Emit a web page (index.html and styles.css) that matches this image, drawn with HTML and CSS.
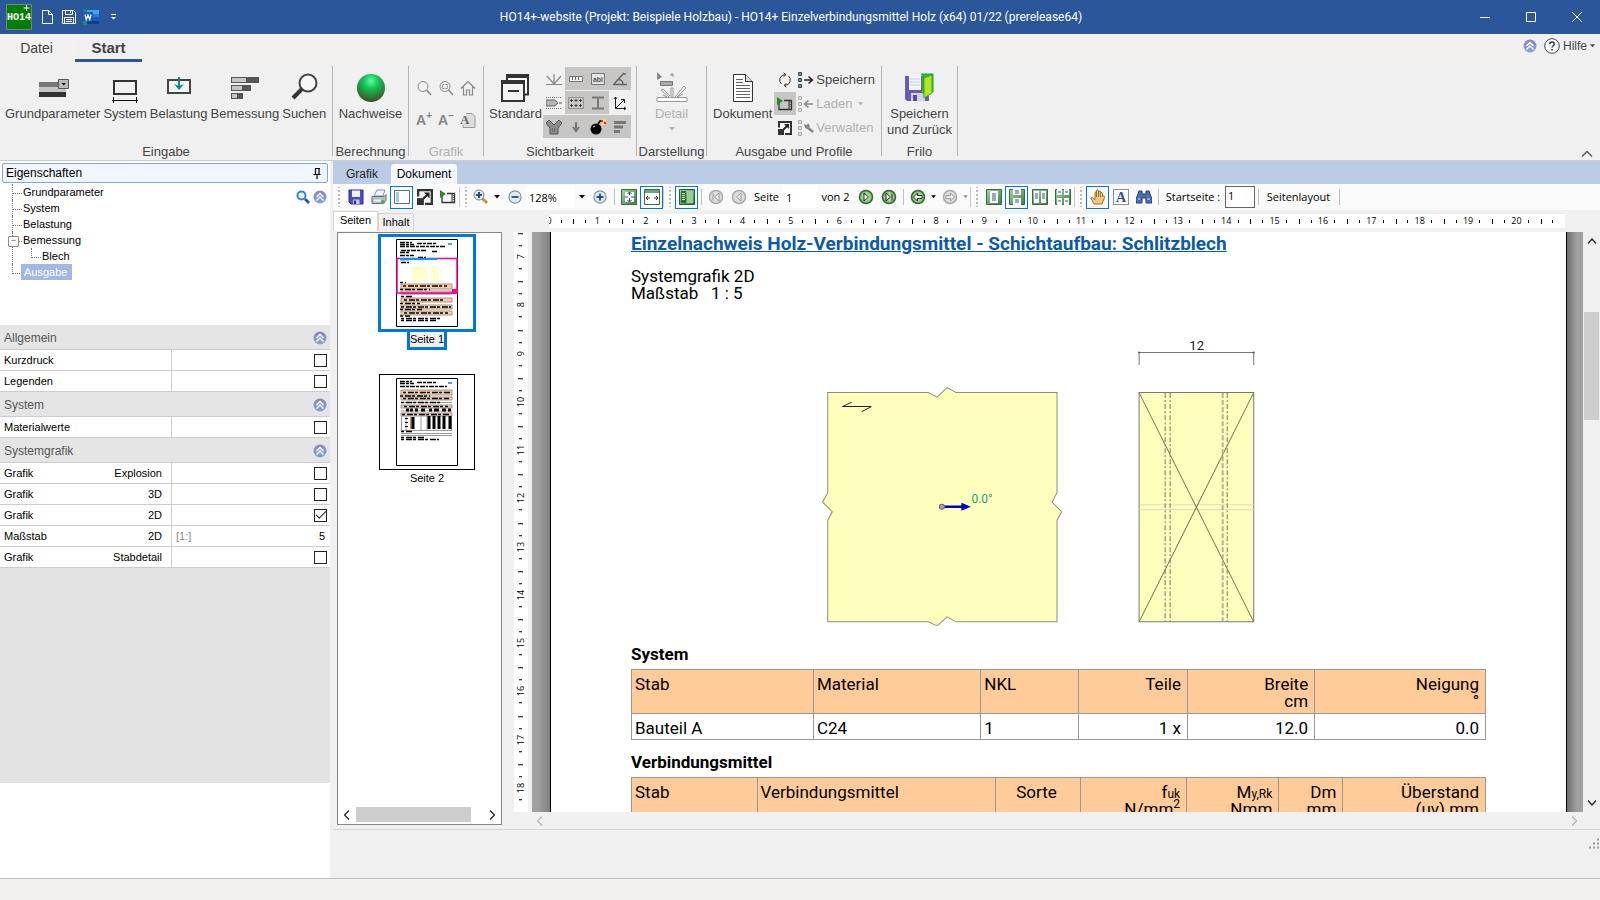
FILE: index.html
```html
<!DOCTYPE html>
<html lang="de">
<head>
<meta charset="utf-8">
<title>HO14+ Einzelverbindungsmittel Holz</title>
<link rel="stylesheet" href="styles.css">
</head>
<body>
<svg class="defs" aria-hidden="true">
  <defs>
    <radialGradient id="ball" cx="50%" cy="25%" r="75%"><stop offset="0" stop-color="#5dff9c"/><stop offset=".35" stop-color="#16c457"/><stop offset=".7" stop-color="#27863a"/><stop offset="1" stop-color="#4a4a22"/></radialGradient>
    <linearGradient id="lilac" x1="0" y1="0" x2="0" y2="1"><stop offset="0" stop-color="#8a83c4"/><stop offset="1" stop-color="#7ea6dc"/></linearGradient>
    <linearGradient id="leaf" x1="0" y1="0" x2="1" y2="1"><stop offset="0" stop-color="#a8d8a0"/><stop offset="1" stop-color="#3f7a45"/></linearGradient>
    <radialGradient id="gleaf"><stop offset="0" stop-color="#d9f5c8"/><stop offset="1" stop-color="#6fbf5f"/></radialGradient>
    <symbol id="fold" viewBox="0 0 14 14"><circle cx="7" cy="7" r="6.500" fill="url(#lilac)"/><path d="M3.500 7 7 3.500 10.500 7M3.500 10.500 7 7l3.500 3.500" fill="none" stroke="#fff" stroke-width="1.400"/></symbol>
    <symbol id="caret" viewBox="0 0 6 4"><path d="M0 0h6L3 3.500z" fill="currentColor"/></symbol>
    <symbol id="lens" viewBox="0 0 16 16"><circle cx="7" cy="6.500" r="5" fill="none" stroke="currentColor"/><path d="m10.500 10 4.500 5" stroke="currentColor" stroke-width="1.600"/></symbol>
    <symbol id="expand" viewBox="0 0 14 14"><path d="M1 1h12v12H1z" fill="#f4f4f4" stroke="#333" stroke-width="2"/><path d="M0 6.500h7V14H0z" fill="#f4f4f4"/><path d="M0 8h6v6H0z" fill="#333"/><path d="m5.500 8.500 4-4" stroke="#222" stroke-width="1.800"/><path d="M6 3h5v5z" fill="#222"/></symbol>
    <symbol id="play" viewBox="0 0 16 14"><path d="M2 5v7.500h12.500v-9H7" fill="none" stroke="#333" stroke-width="1.300"/><path d="M12 4v8" stroke="#333"/><path d="M13.200 5v6" stroke="#333" stroke-dasharray="1 1"/><path d="M0 0l6 4-6 4z" fill="#2c8a2c"/></symbol>
    <symbol id="disk" viewBox="0 0 16 16"><path d="M1 1h14v14H3l-2-2z" fill="#4a4fc0" stroke="#2b2f86"/><path d="M4 1.500h8V8H4z" fill="#eef3ff"/><path d="M5 10.500h6.500V15H5z" fill="#c5cbe8"/><path d="M6 11.500h2V15H6z" fill="#28306e"/></symbol>
    <symbol id="minus" viewBox="0 0 14 14"><circle cx="7" cy="7" r="5.300" fill="#dfe9f4" stroke="#8091a6"/><path d="M4 7h6" stroke="#274d87" stroke-width="1.600"/></symbol>
    <symbol id="plus" viewBox="0 0 14 14"><circle cx="7" cy="7" r="5.300" fill="#dfe9f4" stroke="#8091a6"/><path d="M4 7h6M7 4v6" stroke="#274d87" stroke-width="1.600"/></symbol>
    <symbol id="tiles" viewBox="0 0 5 16"><path d="M.5.500h3v3h-3zM.5 6.500h3v3h-3zM.5 12.500h3v3h-3z" fill="var(--tile)" stroke="currentColor"/></symbol>
  </defs>
</svg>

<header class="titlebar">
  <div class="quick">
    <svg class="i26" viewBox="0 0 26 26"><path d="M.5.500h25v25H.5z" fill="#008000" stroke="#808080"/><text x="13" y="16" class="logo" text-anchor="middle">HO14</text><path d="M20.500 1v6M17.500 4h6" stroke="#fff"/></svg>
    <button aria-label="Neu"><svg class="i16" viewBox="0 0 16 16"><path d="M3.500 1.500h6l4 4v9h-10zM9.500 1.500v4h4" fill="none" stroke="#fff"/></svg></button>
    <button aria-label="Speichern"><svg class="i16" viewBox="0 0 16 16"><path d="M1.500 1.500h11l2 2v11h-13zM4.500 1.500v4h7v-4M3.500 14V8.500h9V14M5 10.500h6M5 12.500h6M9.500 2v2" fill="none" stroke="#fff"/></svg></button>
    <button aria-label="Word"><svg class="i16" viewBox="0 0 16 16"><path d="M4 1h12v5H4z" fill="#41a5ee"/><path d="M4 5h12v4H4z" fill="#2b7cd3"/><path d="M4 8h12v4H4z" fill="#185abd"/><path d="M4 12h12v3H4z" fill="#103f91"/><path d="M0 0h4v16H0z" fill="#0f8a86"/><path d="M0 3h10v9H0z" fill="#185abd"/><path d="m2 5.500 1.300 5L5 6l1.700 4.500L8 5.500" fill="none" stroke="#fff" stroke-width="1.300"/></svg></button>
    <button aria-label="Anpassen"><svg class="i8" viewBox="0 0 8 8"><path d="M1 1.500h5" stroke="#fff"/><path d="M1 4h5L3.500 6.500z" fill="#fff"/></svg></button>
  </div>
  <h1 class="apptitle">HO14+-website (Projekt: Beispiele Holzbau) - HO14+ Einzelverbindungsmittel Holz (x64) 01/22 (prerelease64)</h1>
  <div class="winctl">
    <button aria-label="Minimieren"><svg viewBox="0 0 10 10"><path d="M0 5.500h10"/></svg></button>
    <button aria-label="Maximieren"><svg viewBox="0 0 10 10"><path d="M.5.500h9v9h-9z"/></svg></button>
    <button aria-label="Schließen"><svg viewBox="0 0 10 10"><path d="m0 0 10 10M10 0 0 10"/></svg></button>
  </div>
</header>

<nav class="menutabs">
  <button class="mtab">Datei</button>
  <button class="mtab active">Start</button>
  <div class="help"><svg class="i14"><use href="#fold"/></svg>
    <button class="helpbtn"><svg class="i16" viewBox="0 0 16 16"><circle cx="8" cy="8" r="7.300" fill="#fff" stroke="#444"/><path d="M5.700 6.200c0-3 4.600-3 4.600-.2 0 1.800-2.300 1.700-2.300 3.500M8 11v1.600" fill="none" stroke="#333" stroke-width="1.500"/></svg>Hilfe<svg class="caret"><use href="#caret"/></svg></button></div>
</nav>

<section class="ribbon">
  <div class="group eingabe"><div class="tools">
    <button class="big"><svg viewBox="0 0 32 32"><path d="M2 10h27v5H2z" fill="#777"/><path d="M2 15h27v6H2z" fill="#c6c6c6"/><path d="M2 20h27v5H2z" fill="#333"/><path d="M21.500 7.500h10v9h-10z" fill="#bbb" stroke="#555"/><path d="M24.500 11h4.500l-2.200 2.500z" fill="#111"/></svg>Grundparameter</button>
    <button class="big"><svg viewBox="0 0 32 32"><path d="M5 9h22v13H5z" fill="none" stroke="#333" stroke-width="2"/><path d="M3 28.500h26M4.500 25v6M27.500 25v6" stroke="#111"/></svg>System</button>
    <button class="big"><svg viewBox="0 0 32 32"><path d="M5 8h22v13H5z" fill="#f4f4f4" stroke="#444" stroke-width="2"/><path d="M16 5v11" stroke="#078a8a" stroke-width="2"/><path d="M11 12l5 6 5-6-5 2z" fill="#078a8a"/></svg>Belastung</button>
    <button class="big"><svg viewBox="0 0 32 32"><path d="M2 5h28v6H2zM2 13h20v6H2zM2 21h12v6H2z" fill="#555"/><path d="M3 6h14v4H3zM3 14h10v4H3zM3 22h5v4H3z" fill="#c5c5c5"/></svg>Bemessung</button>
    <button class="big"><svg viewBox="0 0 32 32"><circle cx="20" cy="11" r="8.500" fill="#f6f6f6" stroke="#444" stroke-width="2"/><path d="m14 17-9 9" stroke="#333" stroke-width="4"/></svg>Suchen</button>
  </div><div class="gname">Eingabe</div></div>

  <div class="group berechnung"><div class="tools">
    <button class="big"><svg viewBox="0 0 32 32"><circle cx="16" cy="16" r="14" fill="url(#ball)"/></svg>Nachweise</button>
  </div><div class="gname">Berechnung</div></div>

  <div class="group grafik off"><div class="tools">
    <button aria-label="Zoom"><svg class="i16"><use href="#lens"/></svg></button>
    <button aria-label="Ausschnitt"><svg class="i16" viewBox="0 0 16 16"><use href="#lens"/><path d="M4.500 4.500h5v4h-5z" fill="none" stroke="currentColor" stroke-dasharray="2 1"/></svg></button>
    <button aria-label="Gesamt"><svg class="i16" viewBox="0 0 16 16"><path d="M1 8.500 8 1.500l7 7M3.500 7v8h3v-5h3v5h3V7" fill="none" stroke="currentColor" stroke-width="1.200"/></svg></button>
    <button aria-label="Schrift größer"><b>A<sup>+</sup></b></button>
    <button aria-label="Schrift kleiner"><b>A<sup>−</sup></b></button>
    <button aria-label="Schrift"><svg class="i16" viewBox="0 0 16 16"><path d="M6 1.500h6l3 3v11H3V13" fill="#ddd" stroke="#999"/><text x="0" y="12" class="serifA">A</text></svg></button>
  </div><div class="gname">Grafik</div></div>

  <div class="group sicht"><div class="tools">
    <button class="big"><svg viewBox="0 0 32 32"><path d="M8 3.500h21v19H8z" fill="#fff" stroke="#333" stroke-width="2"/><path d="M7 4h23" stroke="#333" stroke-width="4"/><path d="M3 9h22v20H3z" fill="#f3f3f3" stroke="#333" stroke-width="2"/><path d="M2 10h24" stroke="#333" stroke-width="4"/><path d="M9 19h11" stroke="#333" stroke-width="2"/></svg>Standard</button>
    <div class="toggles">
      <button aria-label="Auflager"><svg viewBox="0 0 16 16"><path d="M0 13.500h16M8 13V3M8 13 1 5M8 13l7-8" fill="none" stroke="#888" stroke-width="1.200"/></svg></button>
      <button class="on" aria-label="Maß"><svg viewBox="0 0 16 16"><path d="M1.500 5.500h13v5h-13z" fill="#eee" stroke="#777"/><path d="M4.500 6v3M7.500 6v3M10.500 6v3" stroke="#666"/></svg></button>
      <button class="on" aria-label="Beschriftung"><svg viewBox="0 0 16 16"><path d="M1.500 2.500h13v11h-13z" fill="#e3e3e3" stroke="#777"/><text x="8" y="11" class="abl" text-anchor="middle">abl</text></svg></button>
      <button class="on" aria-label="Winkel"><svg viewBox="0 0 16 16"><path d="M1 13.500h14M2 13 12 2M5 9c4-1 6 1 6 4" fill="none" stroke="#666" stroke-width="1.500"/><circle cx="13" cy="3" r="1" fill="#666"/></svg></button>
      <button aria-label="Stab"><svg viewBox="0 0 16 16"><path d="M0 5h9l3 3-3 3H0z" fill="#b5b5b5" stroke="#666"/><path d="M0 2.500h16M0 13.500h16" stroke="#777" stroke-dasharray="1 1"/><path d="M13 8h3" stroke="#555"/></svg></button>
      <button class="on" aria-label="Raster"><svg viewBox="0 0 16 16"><path d="M.5 2.500h15v11H.5z" fill="none" stroke="#666" stroke-dasharray="1 1"/><path d="M2 5.500h3M6.500 5.500h3M11 5.500h3M2 10.500h3M6.500 10.500h3M11 10.500h3M3.500 4v3M8 4v3M12.500 4v3M3.500 9v3M8 9v3M12.500 9v3" stroke="#444"/></svg></button>
      <button class="on" aria-label="Profil"><svg viewBox="0 0 16 16"><path d="M2 2.500h12M2 13.500h12" stroke="#777" stroke-width="2"/><path d="M8 2v12" stroke="#777" stroke-width="2"/></svg></button>
      <button aria-label="Achsen"><svg viewBox="0 0 16 16"><path d="M3.500 2v11.500H14M3.500 13.500 12 5M2 4l1.500-2L5 4M12 12l2 1.500-2 1.500M9 4.500h3.500V8" fill="none" stroke="#222"/></svg></button>
      <button class="on" aria-label="Knoten"><svg viewBox="0 0 16 16"><path d="M0 4l3-3 5 5 5-5 3 3-4 5v6H4V9z" fill="#8c8c8c" stroke="#555"/><path d="M6 10h4M6 12h4" stroke="#444" stroke-dasharray="1 1"/></svg></button>
      <button class="on" aria-label="Last"><svg viewBox="0 0 16 16"><path d="M8 3v8M5 8l3 4 3-4" fill="none" stroke="#777" stroke-width="2"/></svg></button>
      <button class="on" aria-label="Explosion"><svg viewBox="0 0 16 16"><circle cx="6" cy="10" r="5.500" fill="#000"/><path d="M8 5l2-3h3" fill="none" stroke="#000" stroke-width="1.500"/><path d="M3 8l2-1" stroke="#fff"/><path d="M11 1h2v2h-2zM14 3h2v2h-2z" fill="#e22"/><path d="M13 0h3v2h-3zM12 4h2v2h-2z" fill="#fe0"/></svg></button>
      <button class="on" aria-label="Ergebnis"><svg viewBox="0 0 16 16"><path d="M2 2h12v3H2zM2 6.500h9v3H2zM2 11h6v3H2z" fill="#777"/></svg></button>
    </div>
  </div><div class="gname">Sichtbarkeit</div></div>

  <div class="group darst"><div class="tools">
    <button class="big off"><svg viewBox="0 0 32 32"><path d="M1 0v8l5-3z" fill="#888"/><path d="M4.500 9.500h12v4h-12z" fill="#aaa" stroke="#777"/><path d="M15 4V2h2v3" fill="none" stroke="#888"/><path d="M1 25.500h30v4H1z" fill="#fff" stroke="#999"/><path d="M15 25v-9h2v9M13 25 5 18l2-1 7 7M19 25l9-11 2 2-9 9M11 25l-4-2M21 25l6-3" fill="none" stroke="#999"/></svg>Detail<svg class="caret"><use href="#caret"/></svg></button>
  </div><div class="gname">Darstellung</div></div>

  <div class="group ausgabe"><div class="tools">
    <button class="big"><svg viewBox="0 0 32 32"><path d="M6.500 2.500h12l7 7v20h-19z" fill="#fff" stroke="#333"/><path d="M18.500 2.500v7h7" fill="#ddd" stroke="#333"/><path d="M9 7.500h7M9 10.500h7M9 13.500h14M9 16.500h14M9 19.500h14M9 22.500h14M9 25.500h14" stroke="#666"/></svg>Dokument</button>
    <div class="col">
      <button aria-label="Aktualisieren"><svg class="i16" viewBox="0 0 16 16"><path d="M4.500 12A5.300 5.300 0 0 1 8 2.700M11.500 4A5.300 5.300 0 0 1 8 13.300M6.500 .7l2.500 2-2.500 2M9.500 11.300l-2.500 2 2.500 2" fill="none" stroke="#333"/></svg></button>
      <button class="on" aria-label="Vorschau"><svg class="i16"><use href="#play"/></svg></button>
      <button aria-label="Vergrößern"><svg class="i14"><use href="#expand"/></svg></button>
    </div>
    <div class="col wide">
      <button><svg class="i16 blue" viewBox="0 0 16 16"><use href="#tiles" width="5" height="16"/><path d="M6 8h8M10.500 4.500 14.500 8l-4 3.500" fill="none" stroke="#222" stroke-width="1.500"/></svg>Speichern</button>
      <button class="off"><svg class="i16" viewBox="0 0 16 16"><use href="#tiles" width="5" height="16"/><path d="M7 8h8M10.500 4.500 6.500 8l4 3.500" fill="none" stroke="#888" stroke-width="1.500"/></svg>Laden<svg class="caret"><use href="#caret"/></svg></button>
      <button class="off"><svg class="i16" viewBox="0 0 16 16"><use href="#tiles" width="5" height="16"/><path d="m9 7 6 5" stroke="#888" stroke-width="2.500"/><path d="M6 4l3 1 1-2 2 3-2 3-3-1z" fill="#888"/></svg>Verwalten</button>
    </div>
  </div><div class="gname">Ausgabe und Profile</div></div>

  <div class="group frilo"><div class="tools">
    <button class="big"><svg viewBox="0 0 32 32"><path d="M2 4h24v25H4l-2-2z" fill="#6b5bb5"/><path d="M6 4h12v14H6z" fill="#f4f6ff"/><path d="M7 7h10M7 10h10M7 13h10" stroke="#c5cbe0"/><path d="M8 21h14v8H8z" fill="#cfd2ea"/><path d="M10 23h4v6h-4z" fill="#5a4ba5"/><path d="M18 2h12v18h-3" fill="#2fbf3f" stroke="#1d9a2d"/><path d="M19 3l7 3v19l-7-4z" fill="#2fae2f"/><path d="M21 6l8-3v18l-8 5z" fill="#b4e61c" stroke="#2fae2f"/></svg>Speichern<br>und Zurück</button>
  </div><div class="gname">Frilo</div></div>
  <button class="collapse" aria-label="Menüband reduzieren"><svg viewBox="0 0 12 8"><path d="M1 6.500 6 1.500l5 5" fill="none" stroke="#555" stroke-width="1.300"/></svg></button>
</section>

<main class="work">
  <aside class="side">
    <div class="sidehead">Eigenschaften<svg class="i12" viewBox="0 0 12 12"><path d="M4 1.500h5M4.500 1v6M8 1v6M2.500 7.500h7M6 8v4" fill="none" stroke="#000" stroke-width="1.200"/></svg></div>
    <div class="treebox">
      <ul class="tree">
        <li><a href="#g">Grundparameter</a></li>
        <li><a href="#s">System</a></li>
        <li><a href="#b">Belastung</a></li>
        <li class="open"><a href="#m">Bemessung</a>
          <ul><li><a href="#l">Blech</a></li></ul></li>
        <li><a href="#a" class="sel">Ausgabe</a></li>
      </ul>
      <div class="treetools"><svg class="i14" viewBox="0 0 14 14"><circle cx="5.500" cy="5.500" r="4" fill="#e8f4ff" stroke="#2d86cf" stroke-width="2"/><path d="m9 9 4 4" stroke="#1d4f91" stroke-width="2.500"/></svg><svg class="i14"><use href="#fold"/></svg></div>
    </div>
    <div class="props">
      <h2 class="sec">Allgemein<svg class="i14"><use href="#fold"/></svg></h2>
      <div class="prop"><label for="p1">Kurzdruck</label><span><input type="checkbox" id="p1"></span></div>
      <div class="prop"><label for="p2">Legenden</label><span><input type="checkbox" id="p2"></span></div>
      <h2 class="sec">System<svg class="i14"><use href="#fold"/></svg></h2>
      <div class="prop"><label for="p3">Materialwerte</label><span><input type="checkbox" id="p3"></span></div>
      <h2 class="sec">Systemgrafik<svg class="i14"><use href="#fold"/></svg></h2>
      <div class="prop"><label for="p4">Grafik<em>Explosion</em></label><span><input type="checkbox" id="p4"></span></div>
      <div class="prop"><label for="p5">Grafik<em>3D</em></label><span><input type="checkbox" id="p5"></span></div>
      <div class="prop"><label for="p6">Grafik<em>2D</em></label><span><input type="checkbox" id="p6" checked></span></div>
      <div class="prop"><label for="p7">Maßstab<em>2D</em></label><span><i>[1:]</i><input type="text" id="p7" value="5"></span></div>
      <div class="prop"><label for="p8">Grafik<em>Stabdetail</em></label><span><input type="checkbox" id="p8"></span></div>
    </div>
    <div class="sideblank"></div>
  </aside>

  <section class="doc">
    <div class="doctabs"><button>Grafik</button><button class="active">Dokument</button></div>
    <div class="toolbar">
      <span class="grip first"></span>
      <button aria-label="Speichern"><svg><use href="#disk"/></svg></button>
      <button aria-label="Drucken"><svg viewBox="0 0 16 16"><path d="M6 1h8l-2 6H3z" fill="#f3f7ff" stroke="#7b93c0"/><path d="M1 7.500h12l2-2v6l-3 3H1z" fill="#b9bec9" stroke="#666f80"/><path d="M3 11.500h7" stroke="#eee" stroke-width="2"/><circle cx="12" cy="13" r="2" fill="#4fae45"/></svg></button>
      <button class="on" aria-label="Seitenleiste"><svg viewBox="0 0 16 16"><path d="M.5 1.500h15v13H.5z" fill="#fff" stroke="#5b6f80"/><path d="M2 3h3v10H2z" fill="#9ec9e8"/></svg></button>
      <button aria-label="Vollbild"><svg><use href="#expand"/></svg></button>
      <button aria-label="Ausführen"><svg><use href="#play"/></svg></button>
      <span class="grip narrow"></span>
      <button aria-label="Zoom"><svg viewBox="0 0 16 16"><path d="m9 9 5 5" stroke="#c9962f" stroke-width="3"/><circle cx="6" cy="6" r="5" fill="#dcebf8" stroke="#73879d"/><path d="M3 6h6M6 3v6" stroke="#274d87" stroke-width="2"/></svg></button>
      <svg class="caret"><use href="#caret"/></svg>
      <button aria-label="Verkleinern"><svg><use href="#minus"/></svg></button>
      <input class="zoomval" aria-label="Zoomfaktor" value="128%">
      <svg class="caret"><use href="#caret"/></svg>
      <button aria-label="Vergrößern"><svg><use href="#plus"/></svg></button>
      <span class="bar"></span>
      <button aria-label="Ganze Seite"><svg viewBox="0 0 16 16"><path d="M.5.500h15v15H.5z" fill="url(#leaf)" stroke="#386b3d"/><path d="M4 3h9v10H4z" fill="#f5f8ff"/><path d="M8.500 3v10M4 8h9" stroke="#445" stroke-dasharray="3 3"/><path d="M6.500 5l2-2 2 2M6.500 11l2 2 2-2" fill="none" stroke="#334"/></svg></button>
      <button class="on" aria-label="Seitenbreite"><svg viewBox="0 0 16 16"><path d="M.5.500h15v15H.5z" fill="#fff" stroke="#386b3d"/><path d="M1 1h14v3H1z" fill="#6fa573"/><path d="M2 9h4M10 9h4M4 7 2 9l2 2M12 7l2 2-2 2" fill="none" stroke="#333"/></svg></button>
      <span class="grip"></span>
      <button class="on" aria-label="Inhalt"><svg viewBox="0 0 16 16"><path d="M.5.500h15v15H.5z" fill="url(#leaf)" stroke="#2b5a30"/><path d="M2 2h5v12H2z" fill="#2c6d35"/><path d="M8 2h6v12H8z" fill="#9ccc96"/><path d="M3 4.500h3M3 6.500h3M3 8.500h3M3 10.500h3" stroke="#cfe8cc"/></svg></button>
      <span class="bar"></span>
      <button class="dim" aria-label="Erste Seite"><svg viewBox="0 0 16 16"><circle cx="8" cy="8" r="6.500" fill="#ddd" stroke="#aaa" stroke-width="1.500"/><path d="M5 4.500v7M11 4 6.500 8l4.500 4z" fill="#eee" stroke="#999"/></svg></button>
      <button class="dim" aria-label="Vorherige Seite"><svg viewBox="0 0 16 16"><circle cx="8" cy="8" r="6.500" fill="#ddd" stroke="#aaa" stroke-width="1.500"/><path d="M10 4 5.500 8l4.500 4z" fill="#eee" stroke="#999"/></svg></button>
      <label class="seite" for="pg">Seite</label><input class="pg" id="pg" value="1"><span class="von">von 2</span>
      <button aria-label="Nächste Seite"><svg viewBox="0 0 16 16"><circle cx="8" cy="8" r="6.500" fill="url(#gleaf)" stroke="#35653a" stroke-width="1.500"/><path d="M6 4l4.500 4L6 12z" fill="#fff" stroke="#222"/></svg></button>
      <button aria-label="Letzte Seite"><svg viewBox="0 0 16 16"><circle cx="8" cy="8" r="6.500" fill="url(#gleaf)" stroke="#35653a" stroke-width="1.500"/><path d="M11 4.500v7M5 4l4.500 4L5 12z" fill="#fff" stroke="#222"/></svg></button>
      <span class="bar"></span>
      <button aria-label="Zurück"><svg viewBox="0 0 16 16"><circle cx="8" cy="8" r="6.500" fill="url(#gleaf)" stroke="#35653a" stroke-width="1.500"/><path d="M3.500 8 7.500 4v2.500H12v3H7.500V12z" fill="#fff" stroke="#222"/></svg></button>
      <svg class="caret small"><use href="#caret"/></svg>
      <button class="dim" aria-label="Vor"><svg viewBox="0 0 16 16"><circle cx="8" cy="8" r="6.500" fill="#ddd" stroke="#aaa" stroke-width="1.500"/><path d="M12.500 8 8.500 4v2.500H4v3h4.500V12z" fill="#eee" stroke="#999"/></svg></button>
      <svg class="caret small dim"><use href="#caret"/></svg>
      <span class="grip"></span>
      <button aria-label="Einzelseite"><svg viewBox="0 0 16 16"><path d="M.5.500h15v15H.5z" fill="url(#leaf)" stroke="#386b3d"/><path d="M4 2h8v12H4z" fill="#f5f8ff"/><path d="M6 5h4M6 7h4M6 9h4M6 11h4" stroke="#556"/></svg></button>
      <button class="on" aria-label="Fortlaufend"><svg viewBox="0 0 16 16"><path d="M.5.500h15v15H.5z" fill="url(#leaf)" stroke="#386b3d"/><path d="M4 0h8v6H4zM4 9h8v7H4z" fill="#f5f8ff"/><path d="M6 2h4M6 4h4M6 11h4M6 13h4" stroke="#556"/></svg></button>
      <button aria-label="Doppelseite"><svg viewBox="0 0 16 16"><path d="M.5.500h15v15H.5z" fill="url(#leaf)" stroke="#386b3d"/><path d="M2 2h5v12H2zM9 2h5v12H9z" fill="#f5f8ff"/><path d="M3 5h3M3 7h3M3 9h3M10 5h3M10 7h3M10 9h3" stroke="#556"/></svg></button>
      <button aria-label="Doppelseite fortlaufend"><svg viewBox="0 0 16 16"><path d="M.5.500h15v15H.5z" fill="url(#leaf)" stroke="#386b3d"/><path d="M2 0h5v6H2zM9 0h5v6H9zM2 9h5v7H2zM9 9h5v7H9z" fill="#f5f8ff"/><path d="M3 3h3M10 3h3M3 12h3M10 12h3" stroke="#556"/></svg></button>
      <span class="grip"></span>
      <button class="on" aria-label="Hand"><svg viewBox="0 0 16 16"><path d="M4 15 1 9.500c0-1.500 1.500-1.200 2.500 0L5 10.500V4c0-1.500 1.500-1.500 1.500 0V2c0-1.500 2-1.500 2 0v1c0-1.500 2-1.500 2 0v1.500c0-1.500 2-1.500 2 0V8c1-2 2.500-1 2 .5L12 15z" fill="#f2cb78" stroke="#99702a"/><path d="M6.500 4v4M8.500 3v5M10.500 4v4" stroke="#99702a"/></svg></button>
      <button aria-label="Text auswählen"><svg viewBox="0 0 16 16"><path d="M.5.500h15v15H.5z" fill="#fff" stroke="#222" stroke-dasharray="1 1"/><text x="8" y="13" class="selA" text-anchor="middle">A</text></svg></button>
      <button aria-label="Suchen"><svg viewBox="0 0 16 16"><path d="M3 2h3v3h4V2h3l1 3 2 5v4h-6V9H6v5H0v-4l2-5z" fill="#4a6fb5" stroke="#223c78"/><path d="M2 10h2M11 10h3" stroke="#cfe0ff"/></svg></button>
      <span class="bar"></span>
      <label class="start" for="st">Startseite :</label><input class="st" id="st" value="1">
      <span class="bar"></span>
      <button class="layout">Seitenlayout</button>
      <span class="bar"></span>
    </div>

    <div class="viewer">
      <div class="pane">
        <div class="ptabs"><button class="active">Seiten</button><button>Inhalt</button></div>
        <div class="pbody">
          <div class="thumbs">
          <figure class="thumb cur">
            <svg viewBox="0 0 62 88"><path d="M.5.500h61v87H.5z" fill="#fff" stroke="#000"/>
              <path d="M4 3.500h12M4 5.500h14M21 4.500h19M4 7.500h46M5 11.500h26M4 13.500h10M36 12.500h6M4 16.500h14M4 20.500h9M22 18.500h8M5 23.500h8" stroke="#000" stroke-width="1.500" stroke-dasharray="5 1 3 1"/>
              <path d="M52 5h4" stroke="#69c" stroke-width="2"/><path d="M16 28h15v14H16zM35 28h8v14h-8z" fill="#ffc"/>
              <path d="M5 45h51v5H5zM5 52h51v3H5zM5 59h51v4H5zM5 66h51v4H5zM5 72h51v4H5z" fill="#fc9" stroke="#999"/>
              <path d="M5 54.500h51" stroke="#96c" stroke-width="1.500"/>
              <path d="M4 43.500h6M7 47h44M4 50.500h30M5 57.500h12M8 61h40M4 64.500h20M5 68h50M4 70.500h22M8 74h44M4 77h10M5 79.500h40M5 81.500h35" stroke="#000" stroke-width="1.500" stroke-dasharray="3 2 6 1"/>
              <path d="M1 19.500h60V54H1z" fill="none" stroke="#f08" stroke-width="1.500"/><path d="M56 50h6v5h-6z" fill="#f08"/><path d="M4 20h37" stroke="#09f" stroke-width="2"/></svg>
            <figcaption>Seite 1</figcaption>
          </figure>
          <figure class="thumb">
            <svg viewBox="0 0 62 88"><path d="M.5.500h61v87H.5z" fill="#fff" stroke="#000"/>
              <path d="M4 3.500h12M4 5.500h14M21 4.500h19M4 8.500h28M33 8.500h18" stroke="#000" stroke-width="1.500" stroke-dasharray="5 1 3 1"/>
              <path d="M52 5h4" stroke="#69c" stroke-width="2"/>
              <path d="M5 12h51v5H5zM5 19h51v3H5zM5 27h51v3H5zM5 35h51v3H5z" fill="#fc9" stroke="#999"/><path d="M5 24.500h51M5 33h51M5 52.500h51M5 55.500h51M5 57.500h51M5.500 38v14M10 38v14M25 38v14M31 38v14M55.500 38v14" stroke="#999"/>
              <path d="M7 14.500h47M4 18h30M7 20.500h46M5 24.500h40M8 28.500h44M6 36.500h47M5 53.500h12M5 59.500h24M5 61.500h38" stroke="#000" stroke-width="1.500" stroke-dasharray="3 2 6 1"/>
              <path d="M10 32h3M14 32h3M19 32h3M25 32h4M33 32h3M38 32h5M46 32h4M52 32h3" stroke="#000" stroke-width="3"/>
              <path d="M10.500 40v11" stroke="#000" stroke-width="3" stroke-dasharray="1 3"/>
              <path d="M15 39v12" stroke="#b63" stroke-width="1.500"/>
              <path d="M17 39v12M33 38v13M38 38v13M43 38v13M48 38v13M54 38v13" stroke="#000" stroke-width="3"/></svg>
            <figcaption>Seite 2</figcaption>
          </figure>
          </div>
          <div class="hscroll"><svg viewBox="0 0 6 10"><path d="M5 .5.500 5 5 9.500"/></svg><div></div><svg viewBox="0 0 6 10"><path d="M1 .5 5.500 5 1 9.500"/></svg></div>
        </div>
      </div>

      <div class="canvas">
        <div class="hruler"><i class="zero">0</i><i>1</i><i>2</i><i>3</i><i>4</i><i>5</i><i>6</i><i>7</i><i>8</i><i>9</i><i>10</i><i>11</i><i>12</i><i>13</i><i>14</i><i>15</i><i>16</i><i>17</i><i>18</i><i>19</i><i>20</i><i class="half"></i></div>
        <div class="vruler"><i>7</i><i>8</i><i>9</i><i>10</i><i>11</i><i>12</i><i>13</i><i>14</i><i>15</i><i>16</i><i>17</i><i>18</i></div>
        <div class="sheet">
          <article class="page">
            <h2 class="title">Einzelnachweis Holz-Verbindungsmittel - Schichtaufbau: Schlitzblech</h2>
            <p class="scale">Systemgrafik 2D<br>Maßstab &nbsp; 1 : 5</p>
            <svg class="drawing" viewBox="632 302 854 342">
              <path d="M828.500 392.500H929l8.700 4.500 10-9.500 9 5h100.800v100l-5 9.500 9.700 9.500-4.700 8.500v101.500H956.700l-9-5-9 8.500h-2l-7.700-3.500H828.500V520l4.500-8.500-9.700-9.500 5.200-9.500z" fill="#ffffbd" stroke="#8d8d78"/>
              <path d="M852.500 402 843 406.500h29l-9.500 5" fill="none" stroke="#222"/>
              <path d="M943 506.500h20" stroke="#00c" stroke-width="2.500"/><path d="M962 502.500l9.500 4-9.500 4z" fill="#00c"/><circle cx="942.500" cy="506.500" r="2.500" fill="#aaa" stroke="#666"/>
              <text x="972" y="503" class="ang">0.0°</text>
              <path d="M1139.500 365v-12.500H1254V365" fill="none" stroke="#777"/><circle cx="1139.500" cy="352.500" r="1" fill="#555"/><circle cx="1254" cy="352.500" r="1" fill="#555"/>
              <text x="1197" y="350" class="dim12" text-anchor="middle">12</text>
              <path d="M1139.500 392.500h114.500v229h-114.500z" fill="#ffffbd" stroke="#777"/>
              <path d="M1140 504.500h114M1140 509.500h114" stroke="#dcdcc0"/>
              <path d="M1139.500 392.500 1254 621.500M1254 392.500 1139.500 621.500" stroke="#77775c"/>
              <path d="M1165.500 393v228M1170.500 393v228M1227.500 393v228" stroke="#77775c" stroke-dasharray="5 2 2 2"/><path d="M1223 393v228" stroke="#b5b58e" stroke-width="2" stroke-dasharray="5 2"/>
            </svg>
            <h3>System</h3>
            <table class="t1">
              <colgroup><col class="a"><col class="b"><col class="c"><col class="d"><col class="e"><col class="f"></colgroup>
              <thead><tr><th>Stab</th><th>Material</th><th>NKL</th><th class="r">Teile</th><th class="r">Breite<br>cm</th><th class="r">Neigung<br>°</th></tr></thead>
              <tbody><tr><td>Bauteil A</td><td>C24</td><td>1</td><td class="r">1 x</td><td class="r">12.0</td><td class="r">0.0</td></tr></tbody>
            </table>
            <h3>Verbindungsmittel</h3>
            <table class="t2">
              <colgroup><col class="a"><col class="b"><col class="c"><col class="d"><col class="e"><col class="f"><col class="g"></colgroup>
              <thead><tr><th>Stab</th><th>Verbindungsmittel</th><th class="m">Sorte</th><th class="r">f<small>uk</small><br>N/mm<sup>2</sup></th><th class="r">M<small>y,Rk</small><br>Nmm</th><th class="r">Dm<br>mm</th><th class="r">Überstand<br>(uv) mm</th></tr></thead>
            </table>
          </article>
        </div>
        <div class="vscroll"><svg viewBox="0 0 10 6"><path d="M1 5.500 5 1l4 4.500"/></svg><div></div><svg viewBox="0 0 10 6"><path d="M1 .5 5 5 9 .500"/></svg></div>
        <div class="hscroll wide"><svg viewBox="0 0 6 10"><path d="M5 .5.500 5 5 9.500"/></svg><svg viewBox="0 0 6 10"><path d="M1 .5 5.500 5 1 9.500"/></svg></div>
      </div>
    </div>
    <div class="lower"><svg class="i12" viewBox="0 0 12 12"><path d="M9 2.500h2M5 6.500h2M9 6.500h2M1 10.500h2M5 10.500h2M9 10.500h2" stroke="#999" stroke-width="2"/></svg></div>
  </section>
</main>
<footer class="status"></footer>
</body>
</html>
```
FILE: styles.css
```css
* { box-sizing: border-box; }
body { margin: 0; height: 100vh; display: flex; flex-direction: column; overflow: hidden; background: #f0f0f0; font: 13px/16px "Liberation Sans", Arial, sans-serif; color: #444; }
button { border: 0; padding: 0; margin: 0; background: none; font: inherit; color: inherit; }
input { font: inherit; border: 0; padding: 0; margin: 0; }
svg { display: block; flex: none; }
a { color: inherit; text-decoration: none; }
.defs { width: 0; height: 0; position: absolute; }
.i8 { width: 8px; height: 8px; }
.i12 { width: 12px; height: 12px; }
.i14 { width: 14px; height: 14px; }
.i16 { width: 16px; height: 16px; }
.i26 { width: 26px; height: 26px; }
.caret { width: 5px; height: 4px; }

.titlebar { height: 34px; flex: none; display: grid; grid-template-columns: 1fr auto 1fr; align-items: center; background: #2b579a; color: #fff; }
.quick { display: flex; align-items: center; gap: 6px; padding-left: 6px; }
.quick .i26 { margin-right: 1px; }
.quick button + button + button + button { margin-left: 5px; }
.logo { font: bold 10px "Liberation Mono", monospace; fill: #fff; }
.apptitle { margin: 0; padding-right: 18px; font: 12px/16px Roboto, sans-serif; white-space: nowrap; }
.winctl { justify-self: end; display: flex; }
.winctl button { width: 46px; height: 34px; display: grid; place-items: center; }
.winctl svg { width: 10px; height: 10px; fill: none; stroke: #fff; }

.menutabs { height: 28px; flex: none; display: flex; background: #f3f1ef; }
.mtab { font-size: 14px; width: 73px; margin-right: 2px; padding-top: 2px; border-bottom: 3px solid transparent; }
.mtab.active { width: 67px; font-weight: bold; font-size: 15px; background: #f0f0f0; border-color: #2b579a; }
.help { margin-left: auto; display: flex; align-items: center; gap: 7px; padding: 0 5px 5px; background: #f0f0f0; }
.helpbtn { display: flex; align-items: center; gap: 3px; font-size: 12px; }

.ribbon { height: 99px; flex: none; display: flex; padding-top: 4px; border-bottom: 1px solid #cfcdcb; position: relative; }
.group { display: flex; flex-direction: column; height: 90px; border-right: 1px solid #b4b4b4; }
.tools { flex: 1; display: flex; align-items: flex-start; justify-content: center; }
.gname { text-align: center; line-height: 16px; margin-bottom: -4px; white-space: nowrap; }
.eingabe { width: 333px; } .berechnung { width: 76px; } .grafik { width: 75px; } .sicht { width: 153px; } .darst { width: 70px; } .ausgabe { width: 175px; } .frilo { width: 76px; }
.eingabe .tools { gap: 3px; justify-content: flex-start; padding-left: 5px; }
.big { display: flex; flex-direction: column; align-items: center; padding-top: 6px; white-space: nowrap; }
.big svg { width: 32px; height: 32px; margin-bottom: 2px; }
.big .caret { width: 6px; height: 4px; margin-top: 5px; }
.off, .off .gname { color: #b0b0b0; }
.grafik .tools { display: grid; grid-template-columns: repeat(3, 22px); grid-auto-rows: 16px; row-gap: 16px; align-content: start; padding-top: 14px; }
.grafik button { height: 16px; display: grid; place-items: center; color: #888; }
.grafik b { font-size: 14px; }
.grafik sup { font-size: 10px; line-height: 1px; }
.serifA { font: bold 13px "Liberation Serif", serif; fill: #666; }
.toggles { display: grid; grid-template-columns: repeat(4, 22px); gap: 1px 0; margin-top: 1px; margin-left: 1px; }
.toggles button { height: 23px; display: grid; place-items: center; }
.toggles svg { width: 16px; height: 16px; }
.on { background: #c8c6c4; }
.abl { font: bold 7px "Liberation Sans", sans-serif; fill: #555; }
.col { display: flex; flex-direction: column; margin-top: 2px; margin-left: 2px; gap: 1px; --tile: #ddd; }
.col button { height: 23px; width: 22px; display: flex; align-items: center; justify-content: center; }
.col.wide button { width: auto; justify-content: flex-start; gap: 2px; }
.col.wide .caret { margin-left: 3px; }
.blue { --tile: #3aa5e0; }
.collapse { position: absolute; right: 7px; bottom: 2px; width: 12px; height: 8px; }

.work { flex: 1; min-height: 0; display: flex; color: #000; }
.side { width: 330px; flex: none; margin-right: 3px; display: flex; flex-direction: column; background: #fff; font-size: 11px; }
.sidehead { height: 20px; flex: none; margin: 2px 2px 0; padding: 0 4px 0 3px; display: flex; align-items: center; justify-content: space-between; border: 1px solid #7fa8e0; border-radius: 2px; background: #f0f6fe; font-size: 12px; }
.treebox { height: 142px; flex: none; display: flex; justify-content: space-between; padding: 1px 3px 0 12px; }
.tree, .tree ul { list-style: none; margin: 0; padding: 0; }
.tree li { line-height: 16px; position: relative; padding-left: 9px; }
.tree li a { display: inline-block; padding: 0 2px; position: relative; }
.tree li::before { content: ""; position: absolute; left: 0; top: 0; width: 9px; height: 9px; border-left: 1px dotted #777; border-bottom: 1px dotted #777; }
.tree > li:not(:last-child)::after { content: ""; position: absolute; left: 0; top: 9px; bottom: 0; border-left: 1px dotted #777; }
.tree ul { padding-left: 10px; }
.tree > li.open > a::before { content: "−"; position: absolute; left: -13px; top: 4px; width: 9px; height: 9px; border: 1px solid #888; border-radius: 1px; background: #fff; color: #2b579a; font-size: 9px; line-height: 7px; text-align: center; z-index: 1; }
.tree .sel { padding: 0 5px 0 3px; background: #a0b8e2; color: #fff; }
.treetools { display: flex; gap: 3px; padding-top: 6px; }
.props { flex: 1; background: #e3e3e3; }
.sec { height: 25px; margin: 0; padding: 2px 3px 0 4px; display: flex; align-items: center; justify-content: space-between; background: #e5e5e5; font: 12px/16px "Liberation Sans", sans-serif; color: #555; border-bottom: 1px solid #ccc; }
.prop { height: 21px; display: grid; grid-template-columns: 172px minmax(0, 1fr); background: #fff; border-bottom: 1px solid #ccc; }
.prop label { display: flex; align-items: center; justify-content: space-between; padding: 0 9px 0 4px; border-right: 1px solid #ccc; }
.prop em { font-style: normal; }
.prop span { display: flex; align-items: center; justify-content: flex-end; padding: 0 3px 0 4px; }
.prop i { font-style: normal; color: #888; }
.prop input[type=text] { flex: 1; min-width: 0; text-align: right; padding-right: 2px; background: none; }
.prop input[type=checkbox] { appearance: none; width: 13px; height: 13px; border: 1px solid #222; background: #fff; display: grid; place-items: center; }
.prop input:checked::after { content: ""; width: 9px; height: 4px; border-left: 1px solid #222; border-bottom: 1px solid #222; transform: rotate(-45deg); margin-bottom: 3px; }
.sideblank { height: 95px; flex: none; }

.doc { flex: 1; min-width: 0; display: flex; flex-direction: column; }
.doctabs { height: 23px; flex: none; display: flex; align-items: flex-end; background: #bbcde6; font-size: 12px; }
.doctabs button { height: 20px; width: 58px; color: #222; }
.doctabs .active { width: 66px; background: #f6faff; border-radius: 3px 3px 0 0; color: #000; }
.toolbar { height: 26px; flex: none; display: flex; align-items: center; background: #fafafa; font: 11px/16px "Open Sans", sans-serif; }
.toolbar button { width: 23px; height: 23px; flex: none; display: grid; place-items: center; }
.toolbar button svg { width: 16px; height: 16px; }
.toolbar .on { border: 1px solid #0078d7; background: none; }
.toolbar .layout { width: 75px; }
.toolbar .caret { width: 6px; height: 4px; margin: 0 3px 0 2px; color: #111; }
.toolbar .caret.small { width: 5px; margin: 0 2px; }
.toolbar .caret.dim { color: #999; }
.grip { flex: none; width: 12px; height: 20px; border-left: 1px solid #ccc; background: radial-gradient(circle, #bbb 1px, transparent 1px) 2px 2px / 8px 4px repeat-y; }
.grip.first { width: 11px; border: 0; }
.grip.narrow { width: 10px; }
.bar { flex: none; width: 6px; height: 16px; background: linear-gradient(#c0c0c0, #c0c0c0) center / 1px 100% no-repeat; }
.toolbar input { height: 22px; background: #fff; padding-left: 3px; flex: none; }
.zoomval { width: 49px; margin-right: 2px; }
.seite { width: 33px; text-align: center; flex: none; }
.pg { width: 34px; }
.von { width: 37px; text-align: center; flex: none; }
.start { width: 64px; text-align: center; flex: none; }
.toolbar .st { width: 30px; border: 1px solid #666; padding: 0 2px 3px; }
.selA { font: bold 14px "Liberation Serif", serif; fill: #2b4f91; }

.viewer { flex: 1; min-height: 0; display: flex; }
.pane { width: 171px; flex: none; display: flex; flex-direction: column; margin: 1px 10px 2px 0; font-size: 11px; }
.ptabs { height: 20px; flex: none; display: flex; align-items: flex-end; }
.ptabs button { height: 18px; width: 36px; padding-bottom: 2px; border: 1px solid #d5d5d5; border-bottom: 0; }
.ptabs .active { height: 20px; width: 45px; background: #fff; padding-bottom: 3px; }
.pbody { flex: 1; min-height: 0; margin: 1px 2px 2px 4px; border: 1px solid #828790; background: #fff; display: flex; flex-direction: column; }
.thumbs { flex: 1; display: flex; flex-direction: column; gap: 24px; padding: 1px 0 0 15px; align-items: center; }
.thumb { margin: 0; display: flex; flex-direction: column; align-items: center; }
.thumb svg { width: 96px; height: 96px; padding: 3px 0; border: 1px solid #000; }
.thumb figcaption { font-size: 11px; line-height: 16px; }
.thumb.cur svg { border: 3px solid #0078d7; padding: 2px 0; width: 98px; height: 98px; }
.thumb.cur figcaption { border: 3px solid #0078d7; border-top: 0; background: #f0f0f0; line-height: 15px; }
.hscroll { height: 17px; flex: none; display: flex; align-items: center; justify-content: space-between; padding: 0 6px; background: #f0f0f0; }
.pane .hscroll { background: #fff; margin-bottom: 1px; }
.hscroll svg { width: 6px; height: 10px; fill: none; stroke: #333; stroke-width: 1.5; }
.hscroll div { flex: 1; height: 15px; background: #cdcdcd; margin: 0 18px 0 6px; }

.canvas { flex: 1; min-width: 0; display: grid; grid-template-columns: 14px 4px 1fr 17px; grid-template-rows: 14px minmax(0, 1fr) 17px; padding-top: 4px; }
.hruler { grid-column: 3; margin: 0 18px 0 17px; display: flex; background: #fff; overflow: hidden; }
.hruler i, .vruler i { flex: 1; font: 9px/14px "Open Sans", sans-serif; text-align: center; }
.hruler i { min-width: 0; background: linear-gradient(#000, #000) 0 50% / 1px 5px, linear-gradient(#000, #000) 25% 50% / 1px 3px, linear-gradient(#000, #000) 75% 50% / 1px 3px; background-repeat: no-repeat; }
.hruler .zero { flex: .5; text-indent: -24px; background: linear-gradient(#000, #000) 50% 50% / 1px 3px no-repeat; }
.hruler .half { flex: .5; background-size: 1px 5px, 1px 3px, 0 0; background-position: 0 50%, 50% 50%, 0 0; }
.vruler { grid-column: 1; grid-row: 2; margin-top: 4px; padding-top: 1px; display: flex; flex-direction: column; background: #fff; overflow: hidden; }
.vruler i { min-height: 0; writing-mode: vertical-rl; transform: rotate(180deg); background: linear-gradient(#000, #000) 50% 100% / 5px 1px, linear-gradient(#000, #000) 50% 25% / 3px 1px, linear-gradient(#000, #000) 50% 75% / 3px 1px; background-repeat: no-repeat; }
.sheet { grid-column: 3; grid-row: 2; margin-top: 4px; overflow: hidden; padding: 0 16px 0 18px; background: linear-gradient(90deg, #a0a0a0 0 6px, #808080 18px) 0 0 / 18px 100% no-repeat, linear-gradient(270deg, #a0a0a0 0 6px, #707070 16px) 100% 0 / 16px 100% no-repeat; }
.page { height: 100%; overflow: hidden; background: #fff; border: solid #000; border-width: 0 1px; padding: 0 80px; font: 17px/17px Roboto, sans-serif; }
.title { margin: 0 0 12px; font-size: 19px; line-height: 24px; color: #0b5aa8; text-decoration: underline; white-space: nowrap; }
.scale { margin: 0; }
.drawing { width: 100%; height: auto; }
.ang { font: 12px Roboto, sans-serif; fill: #1f9a8a; }
.dim12 { font: 13px Roboto, sans-serif; fill: #222; }
.page h3 { margin: 0 0 5px; font-size: 17px; line-height: 20px; }
.page table { width: 100%; table-layout: fixed; border-collapse: collapse; margin-bottom: 12px; }
.page th { background: #fc9; font-weight: normal; text-align: left; }
.page th, .page td { border: 1px solid #999; padding: 6px 6px 2px 3px; vertical-align: top; }
.page .r { text-align: right; }
.page .m { text-align: center; }
.page thead tr { height: 44px; }
.page small { font-size: 12px; line-height: 1px; }
.page sup { font-size: 12px; line-height: 1px; }
.t1 .a { width: 21.3%; } .t1 .b { width: 19.6%; } .t1 .c { width: 11.5%; } .t1 .d { width: 12.7%; } .t1 .e { width: 14.9%; } .t1 .f { width: 20%; }
.t2 .a { width: 14.7%; } .t2 .b { width: 27.9%; } .t2 .c { width: 10%; } .t2 .d { width: 12.4%; } .t2 .e { width: 10.8%; } .t2 .f { width: 7.5%; } .t2 .g { width: 16.7%; }
.vscroll { grid-column: 4; grid-row: 2; margin-top: 4px; display: flex; flex-direction: column; align-items: center; padding: 6px 0; }
.vscroll svg { width: 10px; height: 6px; fill: none; stroke: #333; stroke-width: 1.5; }
.vscroll div { width: 15px; height: 108px; background: #cdcdcd; margin: 68px 0 auto; }
.hscroll.wide { grid-column: 3 / 5; grid-row: 3; padding: 0 23px 0 5px; }
.hscroll.wide svg { stroke: #bbb; }
.lower { height: 49px; flex: none; border-top: 1px solid #d5d5d5; display: flex; justify-content: flex-end; padding-top: 7px; }
.status { height: 22px; flex: none; border-top: 1px solid #bfbfbf; background: #f3f1ef; }
```
